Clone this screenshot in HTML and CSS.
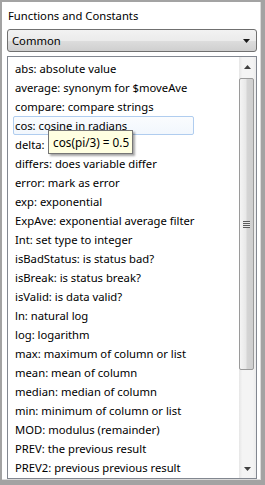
FILE: index.html
```html
<!DOCTYPE html>
<html lang="en">

<head>
    <meta charset="UTF-8">
    <title>Functions and Constants</title>
    <link rel="stylesheet" href="styles.css">
</head>

<body>
    <div class="panel">
        <div class="heading">Functions and Constants</div>

        <div class="combo">
            <span>Common</span>
            <svg class="combo-arrow" width="7" height="4" viewBox="0 0 7 4"><polygon points="0,0 7,0 3.5,4" fill="#1a1a1a"/></svg>
        </div>

        <div class="listbox">
            <ul class="items">
                <li>abs: absolute value</li>
                <li>average: synonym for $moveAve</li>
                <li>compare: compare strings</li>
                <li class="hot">cos: cosine in radians</li>
                <li>delta:</li>
                <li>differs: does variable differ</li>
                <li>error: mark as error</li>
                <li>exp: exponential</li>
                <li>ExpAve: exponential average filter</li>
                <li>Int: set type to integer</li>
                <li>isBadStatus: is status bad?</li>
                <li>isBreak: is status break?</li>
                <li>isValid: is data valid?</li>
                <li>ln: natural log</li>
                <li>log: logarithm</li>
                <li>max: maximum of column or list</li>
                <li>mean: mean of column</li>
                <li>median: median of column</li>
                <li>min: minimum of column or list</li>
                <li>MOD: modulus (remainder)</li>
                <li>PREV: the previous result</li>
                <li>PREV2: previous previous result</li>
            </ul>

            <div class="scrollbar">
                <div class="sb-btn">
                    <svg width="7" height="4" viewBox="0 0 7 4"><polygon points="3.5,0 7,4 0,4" fill="#404040"/></svg>
                </div>
                <div class="track">
                    <div class="thumb">
                        <div class="grip"></div>
                    </div>
                </div>
                <div class="sb-btn">
                    <svg width="7" height="4" viewBox="0 0 7 4"><polygon points="0,0 7,0 3.5,4" fill="#404040"/></svg>
                </div>
            </div>

            <div class="tooltip">cos(pi/3) = 0.5</div>
        </div>
    </div>
</body>

</html>
```

FILE: styles.css
```css
body {
    margin: 0;
    background-color: #a3a3a3;
    font-family: 'Noto Sans', 'Open Sans', sans-serif;
    font-size: 11.25px;
    color: #000;
}

.panel {
    width: 259px;
    height: 478px;
    margin: 2px 0 0 2px;
    padding: 6px 3px 0 5px;
    box-sizing: border-box;
    background-color: #fff;
    border-right: 1px solid #dadada;
    border-bottom: 1px solid #dadada;
}

.heading {
    height: 16px;
    line-height: 16px;
    margin-left: 1px;
}

.combo {
    height: 23px;
    margin-top: 5px;
    padding: 0 6px 0 4px;
    box-sizing: border-box;
    border: 1px solid #707070;
    border-radius: 3px;
    background: linear-gradient(#f2f2f2 0%, #ebebeb 50%, #dddddd 51%, #cfcfcf 100%);
    display: flex;
    align-items: center;
    justify-content: space-between;
}

.listbox {
    position: relative;
    height: 423px;
    margin-top: 4px;
    border: 1px solid #828790;
    box-sizing: border-box;
    display: flex;
}

.items {
    flex: 1;
    list-style: none;
    margin: 0;
    padding: 2px 0 0 5px;
    overflow: hidden;
}

.items li {
    width: 181px;
    height: 19px;
    line-height: 19px;
    padding-left: 2px;
    box-sizing: border-box;
    white-space: nowrap;
}

.items li.hot {
    border: 1px solid #b0cdef;
    border-radius: 2px;
    background: linear-gradient(#fafcfe, #f2f7fd);
    line-height: 17px;
    padding-left: 1px;
}

.scrollbar {
    width: 17px;
    display: flex;
    flex-direction: column;
    background: linear-gradient(to right, #e6e6e6, #f4f4f4 20%, #f4f4f4 80%, #ececec);
}

.sb-btn {
    height: 20px;
    display: flex;
    align-items: center;
    justify-content: center;
}

.sb-btn:last-child {
    height: 18px;
}

.track {
    flex: 1;
}

.thumb {
    height: 290px;
    margin: 1px 2px 0 0;
    border: 1px solid #9a9a9a;
    border-radius: 2px;
    background: linear-gradient(to right, #f4f4f4, #e8e8e8 45%, #d4d4d4 55%, #cfcfcf);
    display: flex;
    align-items: center;
    justify-content: center;
}

.grip {
    width: 7px;
    height: 7px;
    background: repeating-linear-gradient(#5a5a5a 0, #5a5a5a 1px, #e8e8e8 1px, #e8e8e8 2px);
}

.tooltip {
    position: absolute;
    left: 40px;
    top: 73px;
    width: 85px;
    height: 24px;
    padding-left: 4px;
    box-sizing: border-box;
    font-size: 11.75px;
    line-height: 22px;
    background-color: #ffffe1;
    border: 1px solid #767676;
    box-shadow: 2px 2px 2px rgba(0, 0, 0, 0.35);
}
```
